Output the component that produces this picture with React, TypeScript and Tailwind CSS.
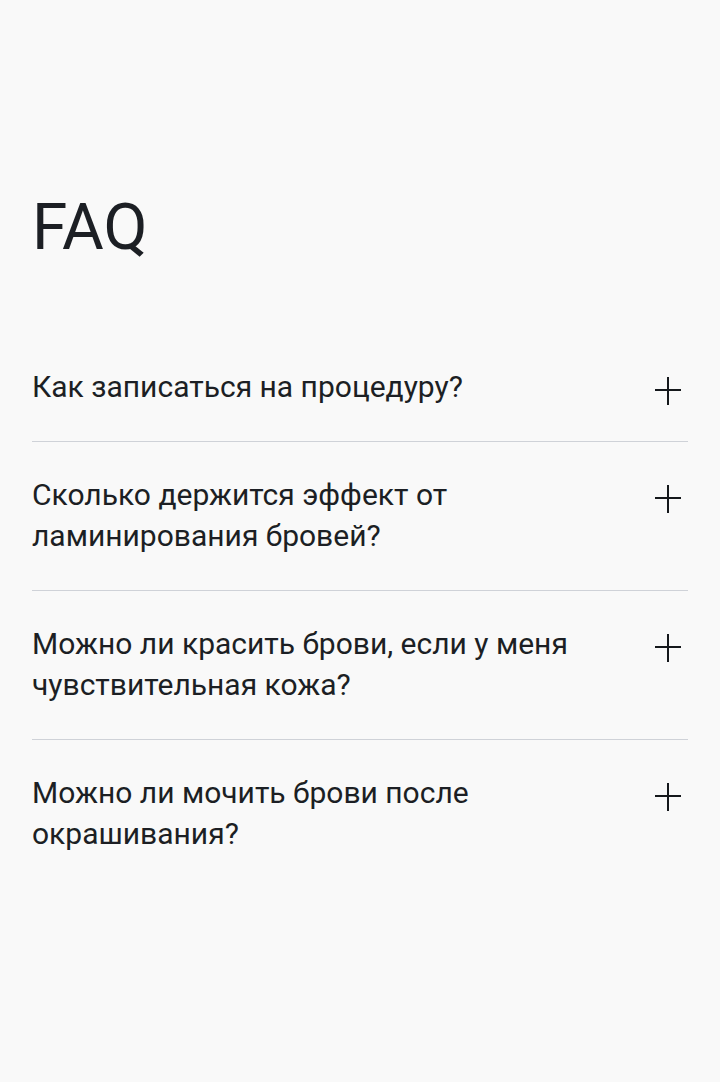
import React from 'react';

const QUESTIONS = [
  'Как записаться на процедуру?',
  'Сколько держится эффект от ламинирования бровей?',
  'Можно ли красить брови, если у меня чувствительная кожа?',
  'Можно ли мочить брови после окрашивания?',
];

function PlusIcon() {
  return (
    <svg width="26" height="28" viewBox="0 0 26 28" fill="none" className="shrink-0">
      <path d="M13 0v28M0 13h26" stroke="#15181c" strokeWidth="2" />
    </svg>
  );
}

export default function App() {
  return (
    <div className="min-h-[1082px] w-full bg-[#f9f9f9] px-8 pt-[196px] font-['Roboto',sans-serif] text-[#1c1f24]">
      <h2 className="text-[64px] leading-none font-normal">FAQ</h2>

      <div className="mt-[74px] divide-y divide-[#cfd2d8]">
        {QUESTIONS.map((q) => (
          <div key={q} className="flex items-start gap-8 pt-[32px] pb-[34px]">
            <p className="flex-1 text-[30px] leading-[41px]">{q}</p>
            <div className="flex w-10 justify-center pt-[11px]">
              <PlusIcon />
            </div>
          </div>
        ))}
      </div>
    </div>
  );
}
